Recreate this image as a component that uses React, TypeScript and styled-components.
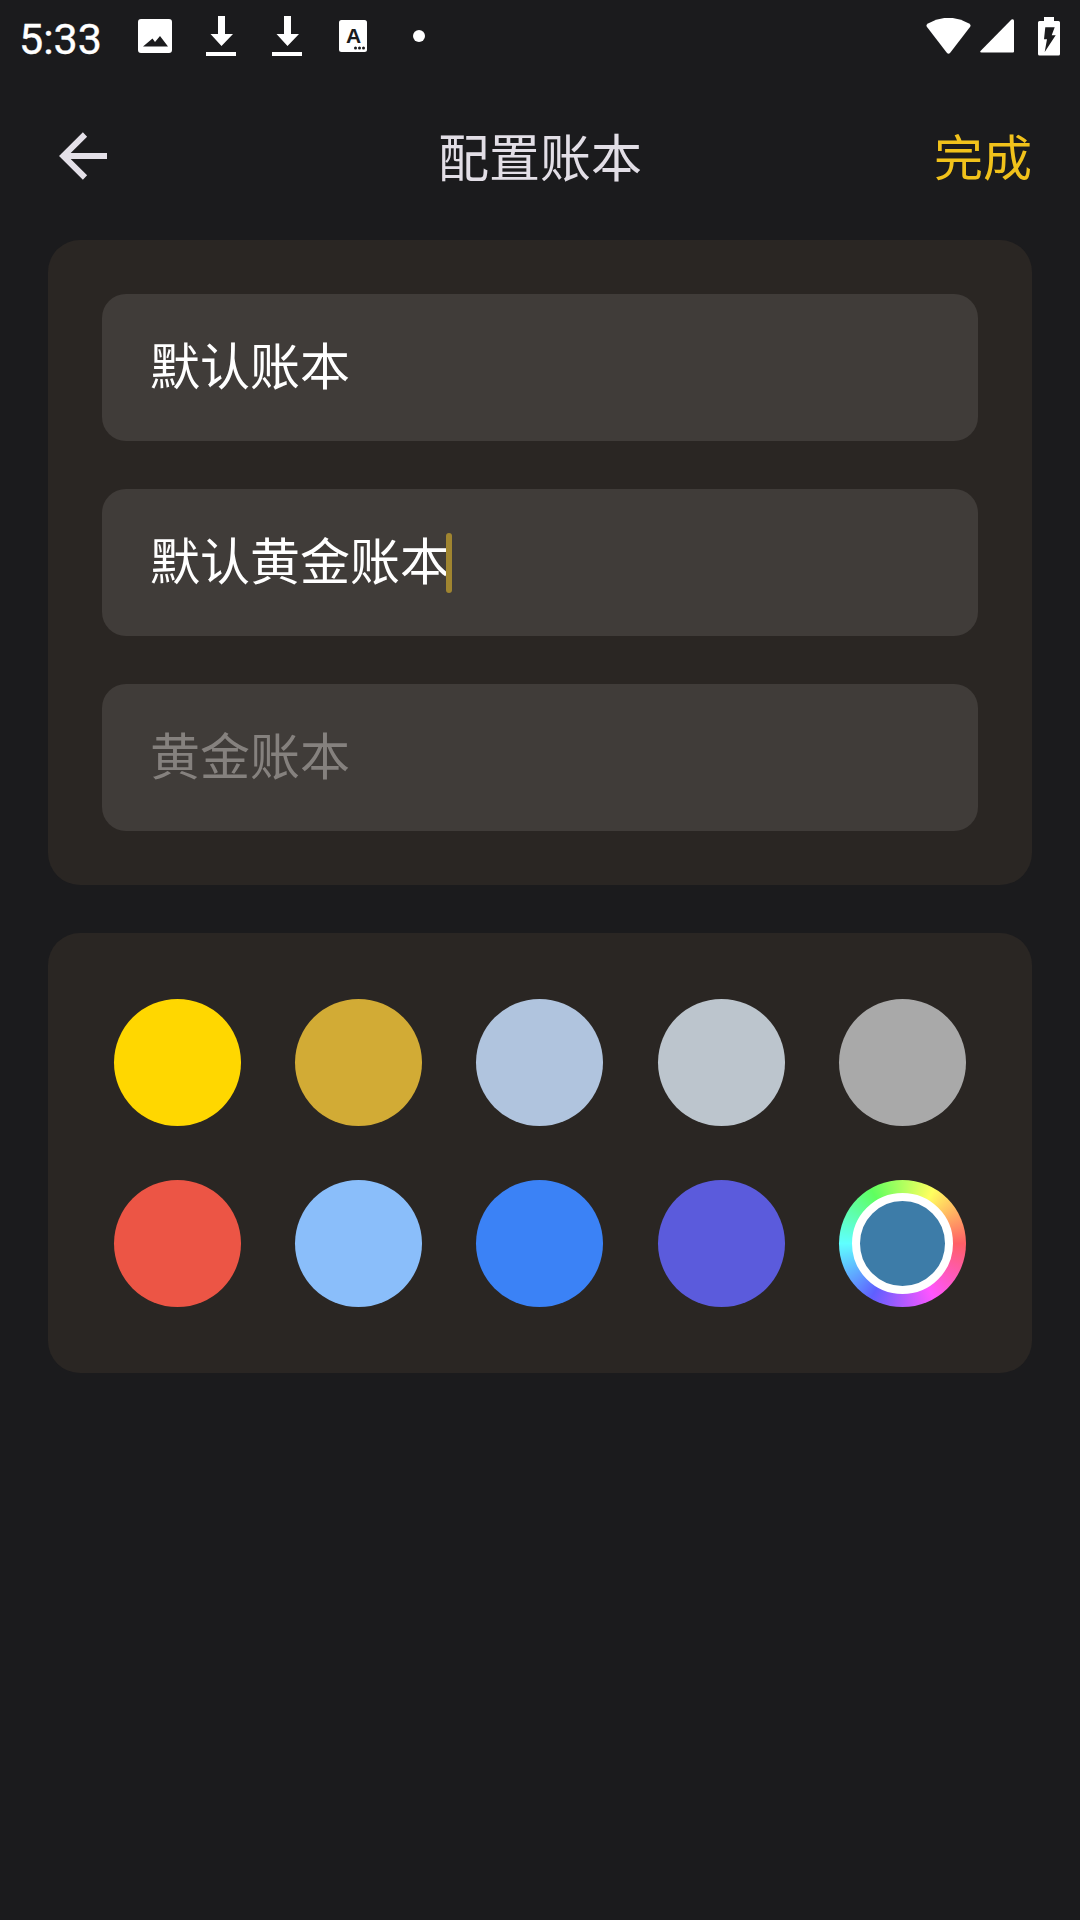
import React from "react";
import styled, { createGlobalStyle } from "styled-components";

const Global = createGlobalStyle`
  html, body { margin: 0; padding: 0; background: #1b1b1d; }
  #root { width: 1080px; height: 1920px; }
`;
const CJK = `"Noto Sans CJK SC", "Noto Sans", sans-serif`;

const Page = styled.div`
  width: 1080px; height: 1920px; background: #1b1b1d; display: flex; flex-direction: column; overflow: hidden;
`;
const StatusBar = styled.div`
  height: 72px; display: flex; align-items: center; padding: 0 20px 0 19px; box-sizing: border-box;
`;
const Clock = styled.div`
  width: 103px; font: 400 43px/72px Roboto, sans-serif; color: #fff; padding-top: 6px; -webkit-text-stroke: 0.4px #fff;
`;
const NotifSlot = styled.div`
  width: 66px; display: flex; justify-content: center; align-items: center;
`;
const Spacer = styled.div`flex: 1;`;
const SysIcons = styled.div`
  display: flex; align-items: center; gap: 9px;
`;
const BatterySlot = styled.div`
  margin-left: 15px;
`;
const Header = styled.div`
  height: 120px; margin: 24px 0; padding: 0 48px 0 59px; display: grid; grid-template-columns: 1fr auto 1fr; align-items: center;
`;
const BackBtn = styled.div`display: flex; align-items: center;`;
const Title = styled.div`
  font: 400 51px/60px ${CJK}; color: #e2dee6; text-align: center; margin-left: -11px; margin-top: -2px;
`;
const Done = styled.div`
  font: 400 49px/60px ${CJK}; color: #f1c21b; text-align: right; margin-top: -2px;
`;
const Content = styled.div`
  padding: 0 48px; display: flex; flex-direction: column; gap: 48px;
`;
const Card = styled.div`
  background: #2a2623; border-radius: 32px;
`;
const FormCard = styled(Card)`
  padding: 54px; display: flex; flex-direction: column; gap: 48px;
`;
const Field = styled.div<{ $muted?: boolean }>`
  height: 147px; border-radius: 24px; background: #403c39; padding-left: 48px; display: flex; align-items: center;
  color: ${(p) => (p.$muted ? "#85817e" : "#fff")};
`;
const FieldText = styled.span`
  font: 400 50px/60px ${CJK}; margin-top: -10px;
`;
const Caret = styled.span`
  width: 6px; height: 60px; border-radius: 3px; background: #a08530; margin-left: -4px;
`;
const PaletteCard = styled(Card)`
  padding: 66px; display: grid; grid-template-columns: repeat(5, 127px); column-gap: 54.2px; row-gap: 54px;
`;
const Swatch = styled.div<{ $color: string }>`
  width: 127px; height: 127px; border-radius: 50%; background: ${(p) => p.$color};
`;
const CustomSwatch = styled.div`
  width: 127px; height: 127px; border-radius: 50%; display: flex; align-items: center; justify-content: center;
  background: conic-gradient(from 90deg, #ff5f66, #ff55ff 60deg, #5f5fff 120deg, #5fffff 180deg, #5fff5f 240deg, #ffff5f 300deg, #ff5f66);
`;
const CustomInner = styled.div`
  width: 85px; height: 85px; border-radius: 50%; background: #3d7ca8; border: 8.5px solid #fff;
`;

const Ico: React.FC<{ box: [number, number, number, number]; children: React.ReactNode }> = ({ box, children }) => (
  <svg width={box[2]} height={box[3]} viewBox={box.join(" ")} style={{ display: "block" }} fill="#fff">{children}</svg>
);

const ImageIcon = () => (
  <Ico box={[138, 19, 34, 34]}>
    <path fillRule="evenodd" d="M141 19h28a3 3 0 0 1 3 3v28a3 3 0 0 1-3 3h-28a3 3 0 0 1-3-3V22a3 3 0 0 1 3-3zM143 46.500h25l-8-10.500-5 6-2.500-3.500z" />
  </Ico>
);
const DownloadIcon = () => (
  <Ico box={[206, 16, 30, 40]}>
    <path d="M218 16h7v18h8l-11.500 12-11-12h7.500zM206 52h30v4h-30z" />
  </Ico>
);
const KeyboardIcon = () => (
  <Ico box={[339, 20, 28, 32]}>
    <rect x="339" y="20" width="28" height="32" rx="2.500" />
    <text x="353.500" y="43" textAnchor="middle" fontFamily="Liberation Sans, sans-serif" fontWeight="700" fontSize="21" fill="#1b1b1d">A</text>
    <circle cx="355.500" cy="48" r="1.500" fill="#1b1b1d" />
    <circle cx="359.500" cy="48" r="1.500" fill="#1b1b1d" />
    <circle cx="363.500" cy="48" r="1.500" fill="#1b1b1d" />
  </Ico>
);
const DotIcon = () => (
  <Ico box={[413, 30, 12, 12]}>
    <circle cx="419" cy="36" r="6" />
  </Ico>
);
const WifiIcon = () => (
  <Ico box={[926, 17, 45, 36]}>
    <path d="M927 26Q925.500 24 928 22.500Q948.500 11 969 22.500Q971.500 24 970 26L950 52Q948.500 53.500 947 52Z" />
  </Ico>
);
const SignalIcon = () => (
  <Ico box={[980, 20, 34, 34]}>
    <path d="M1011.500 20.500Q1014 19.500 1014 22V52.500Q1014 53.500 1013 53.500H981.500Q979.500 53.500 980.500 52Z" />
  </Ico>
);
const BatteryIcon = () => (
  <Ico box={[1038, 15, 22, 39]}>
    <path fillRule="evenodd" d="M1044 15h10v4h4.500a1.500 1.500 0 0 1 1.500 1.500V52a1.500 1.500 0 0 1-1.500 1.500h-19a1.500 1.500 0 0 1-1.500-1.500V20.500a1.500 1.500 0 0 1 1.500-1.500h4.500zM1045.300 25.300h9.400l-3 8h4l-11 16.700 2.300-12.700h-3z" />
  </Ico>
);
const BackIcon = () => (
  <svg width="49" height="50" viewBox="60 131 49 50" style={{ display: "block" }} fill="none" stroke="#e4e0e8" strokeWidth="6">
    <path d="M108 156H65M86 134.500L64.300 156L86 177.500" />
  </svg>
);

const colors = ["#ffd700", "#d2ab35", "#b0c4de", "#bcc5cd", "#a9a9a9", "#ec5545", "#8abefa", "#3b82f6", "#5b5bdc"];

export default function App() {
  return (
    <Page>
      <Global />
      <StatusBar>
        <Clock>5:33</Clock>
        <NotifSlot><ImageIcon /></NotifSlot>
        <NotifSlot><DownloadIcon /></NotifSlot>
        <NotifSlot><DownloadIcon /></NotifSlot>
        <NotifSlot><KeyboardIcon /></NotifSlot>
        <NotifSlot><DotIcon /></NotifSlot>
        <Spacer />
        <SysIcons>
          <WifiIcon />
          <SignalIcon />
          <BatterySlot><BatteryIcon /></BatterySlot>
        </SysIcons>
      </StatusBar>
      <Header>
        <BackBtn><BackIcon /></BackBtn>
        <Title>配置账本</Title>
        <Done>完成</Done>
      </Header>
      <Content>
        <FormCard>
          <Field><FieldText>默认账本</FieldText></Field>
          <Field><FieldText>默认黄金账本</FieldText><Caret /></Field>
          <Field $muted><FieldText>黄金账本</FieldText></Field>
        </FormCard>
        <PaletteCard>
          {colors.map((c) => <Swatch key={c} $color={c} />)}
          <CustomSwatch><CustomInner /></CustomSwatch>
        </PaletteCard>
      </Content>
    </Page>
  );
}
